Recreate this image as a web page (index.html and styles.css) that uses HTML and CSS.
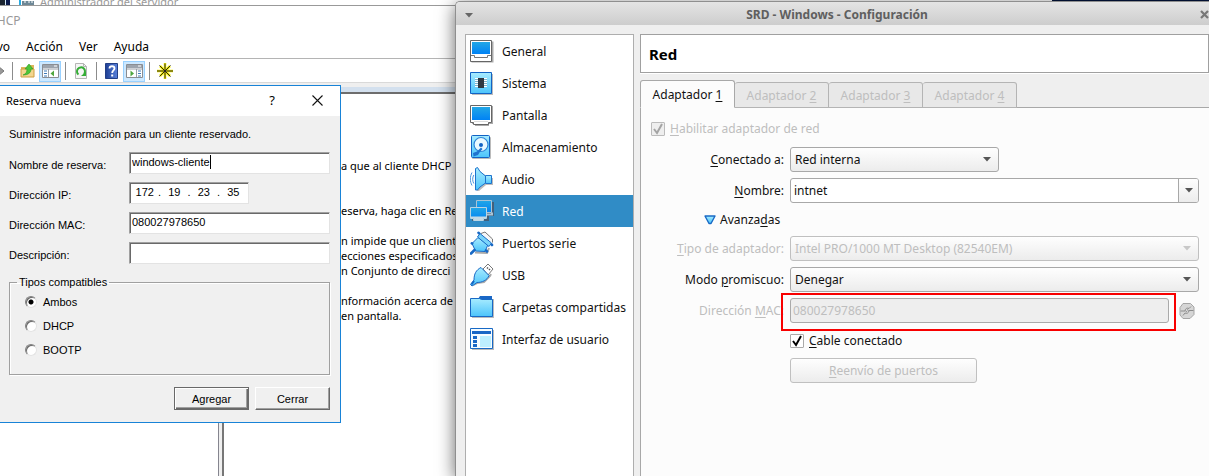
FILE: index.html
```html
<!DOCTYPE html>
<html lang="es">
<head>
<meta charset="utf-8">
<title>SRD - Windows - Configuración</title>
<link rel="stylesheet" href="styles.css">
</head>
<body>
<svg class="defs" aria-hidden="true">
  <defs>
    <linearGradient id="screen" x1="0" y1="0" x2="0" y2="1"><stop offset="0" stop-color="#22a7e6"/><stop offset="1" stop-color="#0082f5"/></linearGradient>
    <linearGradient id="sky" x1="0" y1="0" x2="0" y2="1"><stop offset="0" stop-color="#a8ecff"/><stop offset="1" stop-color="#4cc4fb"/></linearGradient>
    <linearGradient id="help" x1="0" y1="0" x2="1" y2="0"><stop offset="0" stop-color="#1d3e93"/><stop offset="1" stop-color="#5a82dc"/></linearGradient>
  </defs>
</svg>
<div class="desktop">
  <div class="server-strip">
    <span class="taskbar-piece"></span>
    <svg class="server-icon" width="16" height="8" viewBox="0 0 16 8" aria-hidden="true"><path d="M0 0h2v8H0z" fill="#29abe2"/><path d="M4 0h9v3H4zM3 4h12v4H3z" fill="#6d8796"/><path d="M5 5h2M9 5h2M12 5h2" stroke="#fff"/></svg>
    <span class="server-title">Administrador del servidor</span>
    <span class="strip-marks"></span>
    <span class="strip-dark"></span>
  </div>

  <section class="console">
    <header class="console-title">DHCP</header>
    <nav class="menu">
      <a href="#">Archivo</a><a href="#">Acción</a><a href="#">Ver</a><a href="#">Ayuda</a>
    </nav>
    <div class="toolbar">
      <button class="tool" aria-label="Adelante"><svg width="16" height="16" viewBox="0 0 16 16"><path d="M4 6h5V3l6 5-6 5v-3H4z" fill="#999" stroke="#777"/></svg></button>
      <i class="sep"></i>
      <button class="tool" aria-label="Subir un nivel"><svg width="16" height="16" viewBox="0 0 16 16"><path d="M1 4h6l1-2h6v12H1z" fill="#dfb55c"/><path d="M1 6h13v8H1z" fill="#f3d690" stroke="#cf9f43" stroke-width="1"/><path d="M3 12c3-1 4-3 4-6H5l4-5 4 5h-2c0 4-3 6-8 6z" fill="#4cc63a" stroke="#2b9a24" stroke-width=".6"/></svg></button>
      <button class="tool on" aria-label="Mostrar árbol"><svg width="17" height="16" viewBox="0 0 17 16"><path d="M.5 1.500h16v13H.5z" fill="#fff" stroke="#8a8d92"/><path d="M1 2h15v3H1z" fill="#9da4ad"/><path d="M12 3h3" stroke="#fff"/><path d="M1 6h15M6.500 6v8" stroke="#9aa0a8"/><path d="M2 8h3M2 10.500h3M2 13h3" stroke="#3f7ab8"/><path d="M12 7.500v6L8.500 10.500z" fill="#4fa63f"/></svg></button>
      <i class="sep"></i>
      <button class="tool" aria-label="Actualizar"><svg width="16" height="16" viewBox="0 0 16 16"><path d="M2.500 .5h8l3 3v12h-11z" fill="#f5f5f5" stroke="#b5b5b5"/><path d="M10.500 .5v3h3" fill="none" stroke="#b5b5b5"/><path d="M5.500 11.500a4 4 0 1 1 5.500-.5" fill="none" stroke="#35ad36" stroke-width="2"/><path d="M8 13h5V8.500z" fill="#35ad36"/></svg></button>
      <i class="sep"></i>
      <button class="tool" aria-label="Ayuda"><svg width="14" height="16" viewBox="0 0 14 16"><path d="M.5 .5h12v15H.5z" fill="url(#help)" stroke="#233f86"/><path d="M4.500 5.500c0-3 5-3 5 0 0 2-2.300 2-2.300 4.500" fill="none" stroke="#fff" stroke-width="1.800"/><path d="M6.200 11.500h2v2h-2z" fill="#fff"/></svg></button>
      <button class="tool on" aria-label="Mostrar panel de acciones"><svg width="17" height="16" viewBox="0 0 17 16"><path d="M.5 1.500h16v13H.5z" fill="#fff" stroke="#8a8d92"/><path d="M1 2h15v3H1z" fill="#9da4ad"/><path d="M12 3h3" stroke="#fff"/><path d="M1 6h15M10.500 6v8" stroke="#9aa0a8"/><path d="M12 8h3M12 10.500h3M12 13h3" stroke="#3f7ab8"/><path d="M4.500 7.500v6L8 10.500z" fill="#4fa63f"/></svg></button>
      <i class="sep"></i>
      <button class="tool" aria-label="Reserva nueva"><svg width="16" height="16" viewBox="0 0 16 16"><path d="M3 3l10 10M13 3L3 13M0 8h16M8 0v16" stroke="#f7ef00" stroke-width="2.500"/><path d="M2.500 2.500l11 11M13.500 2.500l-11 11M0 8h16M8 .5v15" stroke="#222" stroke-width="1"/></svg></button>
    </div>
    <div class="panes">
      <div class="pane tree"></div>
      <div class="pane help">
        <p>a que al cliente DHCP</p>
        <p class="gap-lg">eserva, haga clic en Re</p>
        <p>n impide que un client<br>ecciones especificados<br>n Conjunto de direcci</p>
        <p>nformación acerca de<br>en pantalla.</p>
      </div>
    </div>
  </section>

  <form class="dialog">
    <header class="dialog-title"><span>Reserva nueva</span>
      <button type="button" class="cap" aria-label="Ayuda">?</button>
      <button type="button" class="cap" aria-label="Cerrar ventana"><svg width="11" height="11" viewBox="0 0 11 11"><path d="M.5 .5l10 10M10.500 .5l-10 10" stroke="#111" stroke-width="1.100"/></svg></button>
    </header>
    <div class="dialog-body">
      <p class="intro">Suministre información para un cliente reservado.</p>
      <div class="fields">
        <label for="rname">Nombre de reserva:</label>
        <div class="sunken"><input id="rname" class="fit" value="windows-cliente"><i class="caret"></i></div>
        <label for="ip1">Dirección IP:</label>
        <div class="sunken ip"><input id="ip1" value="172"><b>.</b><input aria-label="Segundo octeto" value="19"><b>.</b><input aria-label="Tercer octeto" value="23"><b>.</b><input aria-label="Cuarto octeto" value="35"></div>
        <label for="rmac">Dirección MAC:</label>
        <div class="sunken"><input id="rmac" value="080027978650"></div>
        <label for="rdesc">Descripción:</label>
        <div class="sunken"><input id="rdesc"></div>
      </div>
      <fieldset>
        <legend>Tipos compatibles</legend>
        <label><input type="radio" name="t" checked>Ambos</label>
        <label><input type="radio" name="t">DHCP</label>
        <label><input type="radio" name="t">BOOTP</label>
      </fieldset>
      <div class="actions"><button type="button" class="push default">Agregar</button><button type="button" class="push">Cerrar</button></div>
    </div>
  </form>

  <section class="vbox">
    <header class="vbox-title">
      <button class="wm" aria-label="Menú de ventana"><svg width="10" height="6" viewBox="0 0 10 6"><path d="M1 1h8L5 5.500z" fill="#666"/></svg></button>
      <h1>SRD - Windows - Configuración</h1>
      <button class="wm" aria-label="Cerrar"><svg width="9" height="9" viewBox="0 0 9 9"><path d="M1 1l7 7M8 1L1 8" stroke="#777" stroke-width="2.200"/></svg></button>
    </header>
    <div class="vbox-body">
      <nav class="side">
        <a href="#"><svg width="24" height="24" viewBox="0 0 24 24"><path d="M1.500 2.500h22v21h-22z" fill="#aaa"/><path d="M.5 1.500h21v21H.5z" fill="#fff" stroke="#666"/><path d="M2 3h18v12H2z" fill="url(#screen)"/><path d="M1 16.500h3.500v2h13v-2H21" fill="none" stroke="#777"/></svg>General</a>
        <a href="#"><svg width="24" height="24" viewBox="0 0 24 24"><path d="M2 3h21v21H2z" fill="#bbb"/><path d="M.5 1.500h21v21H.5z" fill="url(#sky)" stroke="#1263c4"/><path d="M5 7.500h12M5 9.500h12M5 11.500h12M5 13.500h12M5 15.500h12" stroke="#fff"/><path d="M5 8.500h12M5 10.500h12M5 12.500h12M5 14.500h12" stroke="#7c9cac" stroke-width=".6"/><path d="M8 7h6v10H8z" fill="#303841"/></svg>Sistema</a>
        <a href="#"><svg width="24" height="24" viewBox="0 0 24 24"><path d="M2 3h21v18h-4v2H5v-2H2z" fill="#aaa"/><path d="M.5 2.500h21v17h-3v2h-15v-2h-3z" fill="#fff" stroke="#666"/><path d="M2 4h18v13H2z" fill="url(#screen)"/><path d="M4 18.500h14" stroke="#ddd"/></svg>Pantalla</a>
        <a href="#"><svg width="24" height="24" viewBox="0 0 24 24"><rect x="2" y="2" width="19" height="22" rx="1" fill="#bbb"/><rect x="1.500" y=".5" width="18" height="22" rx="1" fill="url(#sky)" stroke="#1263c4"/><circle cx="11" cy="9.500" r="7" fill="#eaf9ff" stroke="#2f86d8" stroke-width="1.200"/><circle cx="11" cy="10" r="2" fill="#1263c4"/><path d="M11 12.500l1.500 1.500-3 3.500L8 20l-4.500 1.500L3 18l4-1.500z" fill="#1e73cf"/></svg>Almacenamiento</a>
        <a href="#"><svg width="24" height="24" viewBox="0 0 24 24"><path d="M7 2l9 7v2h7v7h-7l-7 6H7z" fill="#bbb"/><path d="M15.500 8.500h6v8h-6z" fill="url(#sky)" stroke="#1d73cd"/><path d="M5.500 1.500l2-1 2.500 4 5.500 4.500v7L10 20l-2.500 3h-2z" fill="url(#sky)" stroke="#1d73cd"/><path d="M3.800 8c-1.500 2.500-1.500 6 0 8.500M2 5.500c-2.200 4-2.200 9 0 13" fill="none" stroke="#4995dc"/></svg>Audio</a>
        <a href="#" class="sel" aria-current="page"><svg width="24" height="24" viewBox="0 0 24 24"><path d="M8 3h16v14H8zM2 10h17v12H2z" fill="#42607b"/><path d="M6.500 1.500h15v12h-15z" fill="url(#screen)" stroke="#a9c4d6"/><path d="M17 15.500h5v-2" fill="none" stroke="#a9c4d6" stroke-width="2"/><path d="M.5 8.500h16v11h-3v2h-10v-2h-3z" fill="url(#screen)" stroke="#b9d4e2"/><path d="M1 18.500h15M4 20.500h9" stroke="#c4d9e5" stroke-width="2"/></svg>Red</a>
        <a href="#"><svg width="24" height="24" viewBox="0 0 24 24"><path d="M11 2.500l4-1.500 7.500 7v3.500" fill="#f6f6f6" stroke="#777"/><path d="M5 21.500l12 .5 2-5" fill="none" stroke="#aaa" stroke-width="2"/><path d="M8 6.500l-6 6L5.500 20 15 20.500l3-7z" fill="url(#sky)" stroke="#1869c5"/><path d="M7.500 6L10 2.500 21.500 12 19 15.500z" fill="#79d4fa" stroke="#1869c5"/><path d="M4.500 19L1 22.500M1.800 12.300l.4 .2M17 20.500l-1-1M8.500 1.800l.5 .4M21.800 13.500l.2 .5" stroke="#1869c5" stroke-width="2.600" stroke-linecap="round"/></svg>Puertos serie</a>
        <a href="#"><svg width="24" height="24" viewBox="0 0 24 24"><path d="M13 6l5-5 5 5-5 6z" fill="#fff" stroke="#777"/><path d="M17 4.500l1 1M20 6l-1 1" stroke="#555" stroke-width="1.500"/><path d="M3 22l4-2 7-1 6-6 1-2" fill="none" stroke="#aaa" stroke-width="2"/><path d="M11 4.500l8 8c-2 5-7 7-12 7l-5 3.500-1.500-1.500L4 17c0-6 2-10 7-12.500z" fill="url(#sky)" stroke="#1869c5"/><path d="M4 18l-2.500 3.500" stroke="#1869c5" stroke-width="2"/></svg>USB</a>
        <a href="#"><svg width="24" height="24" viewBox="0 0 24 24"><path d="M2 4h22v19H2z" fill="#bbb"/><path d="M8 4l2-3h12v4H8z" fill="#1a67c6"/><path d="M.5 3.500h9l2 1h11v17H.5z" fill="url(#sky)" stroke="#1869c5"/></svg>Carpetas compartidas</a>
        <a href="#"><svg width="24" height="24" viewBox="0 0 24 24"><path d="M2 3h22v20H2z" fill="#bbb"/><path d="M.5 1.500h22v20H.5z" fill="#f6fcff" stroke="#1869c5"/><path d="M2 4h19v3H2z" fill="#1a67c6"/><path d="M3 9h4v3H3zM3 13h4v3H3zM3 17h4v3H3z" fill="#1a67c6"/><path d="M10 9h11v11H10z" fill="#bdefff"/></svg>Interfaz de usuario</a>
      </nav>
      <main class="content">
        <h2>Red</h2>
        <div class="tabs" role="tablist">
          <button role="tab" class="tab active" aria-selected="true">Adaptador <u>1</u></button>
          <button role="tab" class="tab" disabled>Adaptador <u>2</u></button>
          <button role="tab" class="tab" disabled>Adaptador <u>3</u></button>
          <button role="tab" class="tab" disabled>Adaptador <u>4</u></button>
        </div>
        <div class="panel">
          <label class="check off"><span class="tick"><input type="checkbox" checked disabled><svg width="12" height="12" viewBox="0 0 12 12"><path d="M2 6l3 4 5-9" fill="none" stroke="currentColor" stroke-width="2"/></svg></span><span><u>H</u>abilitar adaptador de red</span></label>
          <div class="grid">
            <label class="lab" for="conn"><u>C</u>onectado a:</label>
            <div class="combo short"><select id="conn"><option>Red interna</option></select><svg width="10" height="5" viewBox="0 0 10 5"><path d="M1 0h8L5 4.500z" fill="currentColor"/></svg></div>
            <label class="lab" for="net"><u>N</u>ombre:</label>
            <div class="combo-edit"><input id="net" value="intnet"><button aria-label="Desplegar nombres"><svg width="10" height="5" viewBox="0 0 10 5"><path d="M1 0h8L5 4.500z" fill="currentColor"/></svg></button></div>
            <button class="advanced"><svg width="12" height="10" viewBox="0 0 12 10"><path d="M1 1h10L7 8.500H5z" fill="url(#sky)" stroke="#1869c5" stroke-width="1.400" stroke-linejoin="round"/></svg><span>Avanza<u>d</u>as</span></button>
            <label class="lab off" for="type"><u>T</u>ipo de adaptador:</label>
            <div class="combo off"><select id="type" disabled><option>Intel PRO/1000 MT Desktop (82540EM)</option></select><svg width="10" height="5" viewBox="0 0 10 5"><path d="M1 0h8L5 4.500z" fill="currentColor"/></svg></div>
            <label class="lab" for="prom">Modo <u>p</u>romiscuo:</label>
            <div class="combo"><select id="prom"><option>Denegar</option></select><svg width="10" height="5" viewBox="0 0 10 5"><path d="M1 0h8L5 4.500z" fill="currentColor"/></svg></div>
            <label class="lab off" for="mac">Dirección <u>M</u>AC:</label>
            <div class="mac-row">
              <div class="mac"><input id="mac" value="080027978650" disabled><i class="highlight"></i></div>
              <button class="refresh" disabled aria-label="Generar dirección MAC"><svg width="16" height="16" viewBox="0 0 16 16"><path d="M4 .5h7.500L15 4v7.500l-4 4H4L1 12V4.500z" fill="#d6d6d6" stroke="#a5a5a5" stroke-linejoin="round"/><path d="M1.500 8H6c0-2.500 2.500-3.500 4-2.500L12 3.500M14.500 7.500H10c0 2.500-2.500 3.500-4 2.500L4 12.500M8 6.500l1.500 1M8 9L6.500 8" fill="none" stroke="#8c8c8c"/></svg></button>
            </div>
            <label class="check cable"><span class="tick"><input type="checkbox" checked><svg width="12" height="12" viewBox="0 0 12 12"><path d="M2 6l3 4 5-9" fill="none" stroke="currentColor" stroke-width="2"/></svg></span><span><u>C</u>able conectado</span></label>
            <button class="ports" disabled><span><u>R</u>eenvío de puertos</span></button>
          </div>
        </div>
      </main>
    </div>
  </section>
</div>
</body>
</html>
```
FILE: styles.css
```css
* { box-sizing: border-box; }
body { margin: 0; font-family: "Noto Sans", sans-serif; font-size: 12px; color: #111; }
h1, h2, p { margin: 0; }
a { color: inherit; text-decoration: none; }
input, button, select { font: inherit; color: inherit; margin: 0; padding: 0; border: 0; background: none; border-radius: 0; min-width: 0; }
input:focus, button:focus { outline: none; }
svg { display: block; flex: none; }
u { text-decoration: underline; text-underline-offset: 2px; text-decoration-thickness: 1px; }
.defs { position: absolute; width: 0; height: 0; }
.desktop { position: relative; height: 100vh; overflow: hidden; background: #fff; }

/* Strip of the server manager window behind */
.server-strip { display: flex; height: 5px; overflow: hidden; align-items: flex-end; font-size: 11px; color: #999; }
.taskbar-piece { width: 10px; height: 5px; background: linear-gradient(90deg, #1b2530 0 50%, #cfe6f5 50% 65%, #0a1a4a 65%); }
.server-icon { margin-left: 9px; }
.server-title { margin-left: 5px; line-height: 15px; margin-bottom: -4px; white-space: nowrap; }
.strip-marks { flex: 1; }
.strip-dark { width: 13%; height: 5px; background: #02133a; }

/* DHCP console */
.console { position: absolute; top: 5px; left: -40px; width: 520px; bottom: 0; display: flex; flex-direction: column; border-top: 1px solid #999; background: #fff; font-size: 12px; }
.console-title { height: 29px; padding-left: 28px; line-height: 29px; color: #999; }
.menu { display: flex; gap: 16px; height: 23px; padding-left: 8px; line-height: 23px; color: #000; }
.toolbar { display: flex; align-items: center; height: 25px; padding: 1px 0 0 26px; border-top: 1px solid #b4b4b4; border-bottom: 1px solid #d9d9d9; }
.tool { display: flex; align-items: center; justify-content: center; width: 22px; height: 21px; border: 1px solid transparent; }
.tool.on { background: #cce8ff; border-color: #99d1ff; }
.sep { width: 1px; height: 18px; margin: 0 4px; background: #8c8c8c; }
.panes { flex: 1; display: grid; grid-template-columns: 259px 1fr; gap: 3px; padding-top: 9px; background: #efefef; }
.pane { background: #fff; border-top: 2px solid #6d6d6d; }
.tree { border-right: 1px solid #85858f; }
.help { border-left: 2px solid #777; padding: 64px 0 0 117px; font-size: 11px; line-height: 15px; white-space: nowrap; color: #000; box-shadow: 0 -5px #d3e0ee; }
.help p { margin-bottom: 15px; }
.help p.gap-lg { margin-top: 30px; }

/* Reservation dialog */
.dialog { position: absolute; left: -1px; top: 85px; width: 342px; background: #f0f0f0; border: 1px solid #1883d7; font-family: "Liberation Sans", Arial, sans-serif; font-size: 11px; color: #000; }
.dialog-title { display: flex; align-items: center; height: 30px; padding: 0 7px 2px 6px; background: #fff; font-family: "Noto Sans", sans-serif; font-size: 11px; }
.dialog-title span { flex: 1; }
.cap { display: flex; align-items: center; justify-content: center; width: 32px; height: 28px; font-size: 13px; }
.cap + .cap { margin-left: 13px; }
.dialog-body { padding: 12px 10px 12px 9px; }
.intro { line-height: 12px; margin-bottom: 12px; }
.fields { display: grid; grid-template-columns: 120px 1fr; grid-auto-rows: 22px; row-gap: 8px; align-items: center; }
.fields label { padding-top: 3px; }
.sunken { display: flex; height: 22px; background: #fff; border: 1px solid #a0a0a0; border-right-color: #e3e3e3; border-bottom-color: #e3e3e3; box-shadow: inset 1px 1px #696969; padding: 2px 2px 3px; }
.sunken input { flex: 1; height: 15px; line-height: 15px; }
.sunken input.fit { flex: none; field-sizing: content; }
.caret { width: 1px; height: 14px; background: #000; }
.ip { width: 120px; }
.ip input { text-align: center; }
.ip b { width: 4px; font-weight: normal; line-height: 15px; text-align: center; }
fieldset { margin: 12px 0; padding: 2px 15px 12px; min-width: 0; border: 1px solid #a0a0a0; box-shadow: 1px 1px #fff, inset 1px 1px #fff; }
legend { padding: 0 2px; margin-left: -8px; line-height: 12px; }
fieldset label { display: flex; align-items: center; gap: 6px; height: 24px; }
input[type="radio"] { appearance: none; width: 12px; height: 12px; border-radius: 50%; background: #fff; border: 1px solid; border-color: #808080 #e3e3e3 #e3e3e3 #808080; box-shadow: inset 1px 1px #696969; }
input[type="radio"]:checked { background: radial-gradient(circle, #000 0 2px, #fff 3px); }
.actions { display: flex; justify-content: flex-end; gap: 6px; }
.push { width: 75px; height: 23px; background: #f0f0f0; border: 1px solid; border-color: #fff #696969 #696969 #fff; box-shadow: inset -1px -1px #a0a0a0; }
.push.default { border-color: #696969; box-shadow: inset 1px 1px #fff, inset -1px -1px #696969, inset -2px -2px #a0a0a0; }

/* Machine settings window */
.vbox { position: absolute; left: 455px; right: 0; top: 1px; bottom: 0; display: flex; flex-direction: column; background: #efefef; border: solid #8f8f8f; border-width: 1px 0 0 1px; border-top-left-radius: 5px; box-shadow: 0 4px 18px rgba(0, 0, 0, .6); }
.vbox-title { display: flex; align-items: center; height: 23px; flex: none; padding: 2px 0 0 8px; background: linear-gradient(#e4e4e4, #cdcdcd); border-top-left-radius: 4px; }
.vbox-title h1 { flex: 1; text-align: center; font-size: 12px; font-weight: bold; color: #5f5f5f; }
.wm { display: flex; align-items: center; }
.vbox-body { flex: 1; min-height: 0; display: grid; grid-template-columns: 169px 1fr; gap: 6px; padding: 9px 0 0 9px; }
.side { background: #fff; border: 1px solid #aeaeae; border-bottom: 0; }
.side a { display: flex; align-items: center; gap: 8px; height: 32px; padding-left: 4px; white-space: nowrap; }
.side .sel { background: #308cc6; color: #fff; }
.content { display: flex; flex-direction: column; min-width: 0; }
.content h2 { flex: none; height: 39px; padding-left: 8px; line-height: 39px; font-size: 15px; font-weight: bold; color: #000; background: #fff; border: 1px solid #a0a0a0; box-shadow: 0 1px #fff; }
.tabs { position: relative; z-index: 1; display: flex; align-items: flex-end; height: 35px; flex: none; margin-bottom: -1px; }
.tab { width: 94px; height: 26px; border: 1px solid #b4b4b4; border-left-width: 0; border-radius: 3px 3px 0 0; background: #e8e8e8; color: #bebebe; white-space: nowrap; }
.tab.active { width: 95px; height: 28px; border: 1px solid #a8a8a8; border-bottom-color: #fcfcfc; background: #fcfcfc; color: #111; }
.panel { flex: 1; background: #fcfcfc; border: solid #a8a8a8; border-width: 1px 0 0 1px; padding: 10px 10px 0; }
.off { color: #bebebe; }
.check { display: flex; align-items: center; gap: 5px; height: 21px; }
.tick { display: grid; place-items: center; }
.tick > * { grid-area: 1 / 1; }
.tick input { appearance: none; width: 14px; height: 14px; border: 1px solid #aaa; border-radius: 1px; background: #fff; }
.off .tick input { border-color: #bbb; background: #eee; }
.tick svg { z-index: 1; pointer-events: none; color: #000; }
.off .tick svg { color: #a4a4a4; }
.grid { display: grid; grid-template-columns: 133px minmax(0, 1fr); gap: 6px; margin-top: 8px; }
.lab { text-align: right; line-height: 25px; white-space: nowrap; }
.combo { display: grid; align-items: center; height: 25px; border: 1px solid #a8a8a8; border-radius: 3px; background: linear-gradient(#fefefe, #ececec); color: #111; }
.combo > * { grid-area: 1 / 1; }
.combo.short { width: 209px; }
.combo select { appearance: none; width: 100%; height: 23px; padding-left: 4px; opacity: 1; }
.combo svg { justify-self: end; margin-right: 6px; color: #555; pointer-events: none; }
.combo.off { color: #bebebe; border-color: #c0c0c0; }
.combo.off svg { color: #c8c8c8; }
.combo-edit { display: flex; height: 25px; border: 1px solid #a8a8a8; border-radius: 3px; background: #fff; }
.combo-edit input { flex: 1; padding-left: 3px; }
.combo-edit button { display: flex; align-items: center; justify-content: center; width: 20px; border-left: 1px solid #a8a8a8; background: linear-gradient(#fefefe, #ececec); border-radius: 0 2px 2px 0; color: #555; }
.advanced { grid-column: 1 / -1; justify-self: start; display: flex; align-items: center; gap: 4px; height: 21px; margin-left: 53px; }
.mac-row { display: flex; align-items: center; gap: 10px; padding-right: 4px; }
.mac { position: relative; flex: 1; height: 25px; }
.mac input { width: 100%; height: 25px; padding-left: 2px; border: 1px solid #aaa; border-radius: 3px; background: #eee; color: #bebebe; }
.highlight { position: absolute; inset: -5px -7px -8px -9px; border: 2px solid #f80000; pointer-events: none; }
.cable { grid-column: 2; height: 23px; }
.ports { grid-column: 2; width: 187px; height: 25px; border: 1px solid #c0c0c0; border-radius: 3px; background: linear-gradient(#fefefe, #ececec); color: #bebebe; }
```
